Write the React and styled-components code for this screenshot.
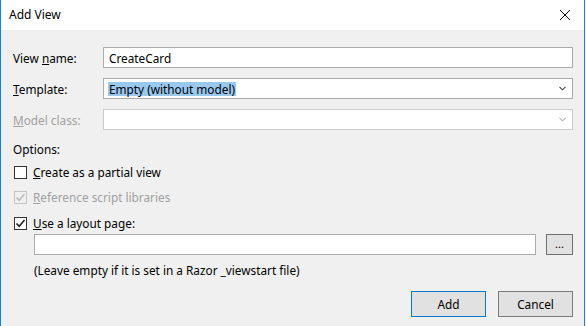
import React from "react";
import styled, { createGlobalStyle } from "styled-components";

const Global = createGlobalStyle`
  html, body { margin: 0; padding: 0; background: #ffffff; }
  body { font-family: "Segoe UI", "Noto Sans", sans-serif; font-size: 11.8px; color: #000; }
  * { box-sizing: border-box; }
`;

const Window = styled.div`
  width: 585px;
  height: 326px;
  border-left: 1px solid #1a7fd4;
  border-right: 1px solid #1a7fd4;
  display: flex;
  flex-direction: column;
  background: #f0f0f0;
`;

const TitleBar = styled.div`
  height: 30px;
  background: #ffffff;
  display: flex;
  align-items: center;
  justify-content: space-between;
  padding: 0 9px 0 8px;
`;

const Title = styled.span`
  font-size: 12px;
  line-height: 16px;
  padding-bottom: 1px;
`;

const Close = styled.div`
  width: 12px;
  height: 12px;
  display: flex;
  margin-right: 4px;
`;

const Body = styled.div`
  flex: 1;
  padding: 17px 11px 0 12px;
  display: flex;
  flex-direction: column;
`;

const FieldGrid = styled.div`
  display: grid;
  grid-template-columns: 90px 1fr;
  row-gap: 10px;
  align-items: center;
`;

const Label = styled.label`
  color: ${(p) => (p.$disabled ? "#a0a0a0" : "#000")};
  line-height: 16px;
`;

const Field = styled.div`
  height: 21px;
  background: #fff;
  border: 1px solid ${(p) => (p.$disabled ? "#cccccc" : "#ababab")};
  display: flex;
  align-items: center;
  padding: 0 6px 0 4px;
  justify-content: space-between;
`;

const Selected = styled.span`
  background: #99c9ef;
  line-height: 14px;
  padding: 0 1px;
`;

const Value = styled.span`
  line-height: 16px;
  padding-left: 1px;
`;

const Section = styled.div`
  margin-top: 11px;
  line-height: 16px;
`;

const CheckRow = styled.div`
  display: flex;
  align-items: center;
  gap: 6px;
  height: 16px;
  margin-top: ${(p) => p.$mt}px;
  padding-left: 1px;
  color: ${(p) => (p.$disabled ? "#a0a0a0" : "#000")};
`;

const Box = styled.span`
  width: 13px;
  height: 13px;
  border: 1px solid ${(p) => (p.$disabled ? "#c4c4c4" : "#333333")};
  background: ${(p) => (p.$disabled ? "#f0f0f0" : "#ffffff")};
  display: flex;
  align-items: center;
  justify-content: center;
`;

const LayoutRow = styled.div`
  display: flex;
  gap: 10px;
  margin-top: 3px;
  padding-left: 21px;
`;

const PathInput = styled.div`
  flex: 1;
  height: 21px;
  background: #fff;
  border: 1px solid #ababab;
`;

const Browse = styled.div`
  width: 27px;
  height: 21px;
  background: #e1e1e1;
  border: 1px solid #707070;
  display: flex;
  align-items: center;
  justify-content: center;
  font-size: 11px;
  line-height: 10px;
  padding-bottom: 2px;
`;

const Hint = styled.div`
  padding-left: 21px;
  margin-top: 7px;
  line-height: 16px;
`;

const Buttons = styled.div`
  display: flex;
  justify-content: flex-end;
  gap: 12px;
  margin-top: 13px;
`;

const Button = styled.div`
  width: 75px;
  height: 26px;
  background: #e1e1e1;
  border: 1px solid ${(p) => (p.$primary ? "#0078d7" : "#7a7a7a")};
  display: flex;
  align-items: center;
  justify-content: center;
  line-height: 16px;
`;

const Chevron = ({ color }) => (
  <svg width="7" height="5" viewBox="0 0 7 5">
    <path d="M0.5 0.8 L3.5 3.8 L6.5 0.8" fill="none" stroke={color} strokeWidth="1.1" />
  </svg>
);

const Check = ({ color }) => (
  <svg width="11" height="11" viewBox="0 0 11 11">
    <path d="M1.5 5.5 L4.2 8.3 L9.5 2" fill="none" stroke={color} strokeWidth="1.6" />
  </svg>
);

export default function App() {
  return (
    <>
      <Global />
      <Window>
        <TitleBar>
          <Title>Add View</Title>
          <Close>
            <svg width="12" height="12" viewBox="0 0 12 12">
              <path d="M1 1 L11 11 M11 1 L1 11" stroke="#000" strokeWidth="1" />
            </svg>
          </Close>
        </TitleBar>
        <Body>
          <FieldGrid>
            <Label>
              View <u>n</u>ame:
            </Label>
            <Field>
              <Value>CreateCard</Value>
            </Field>
            <Label>
              <u>T</u>emplate:
            </Label>
            <Field>
              <Selected>Empty (without model)</Selected>
              <Chevron color="#444" />
            </Field>
            <Label $disabled>
              <u>M</u>odel class:
            </Label>
            <Field $disabled>
              <span />
              <Chevron color="#b5b5b5" />
            </Field>
          </FieldGrid>
          <Section>Options:</Section>
          <CheckRow $mt={7}>
            <Box />
            <span>
              <u>C</u>reate as a partial view
            </span>
          </CheckRow>
          <CheckRow $mt={9} $disabled>
            <Box $disabled>
              <Check color="#bcbcbc" />
            </Box>
            <span>
              <u>R</u>eference script libraries
            </span>
          </CheckRow>
          <CheckRow $mt={10}>
            <Box>
              <Check color="#222" />
            </Box>
            <span>
              <u>U</u>se a layout page:
            </span>
          </CheckRow>
          <LayoutRow>
            <PathInput />
            <Browse>...</Browse>
          </LayoutRow>
          <Hint>(Leave empty if it is set in a Razor _viewstart file)</Hint>
          <Buttons>
            <Button $primary>Add</Button>
            <Button>Cancel</Button>
          </Buttons>
        </Body>
      </Window>
    </>
  );
}
